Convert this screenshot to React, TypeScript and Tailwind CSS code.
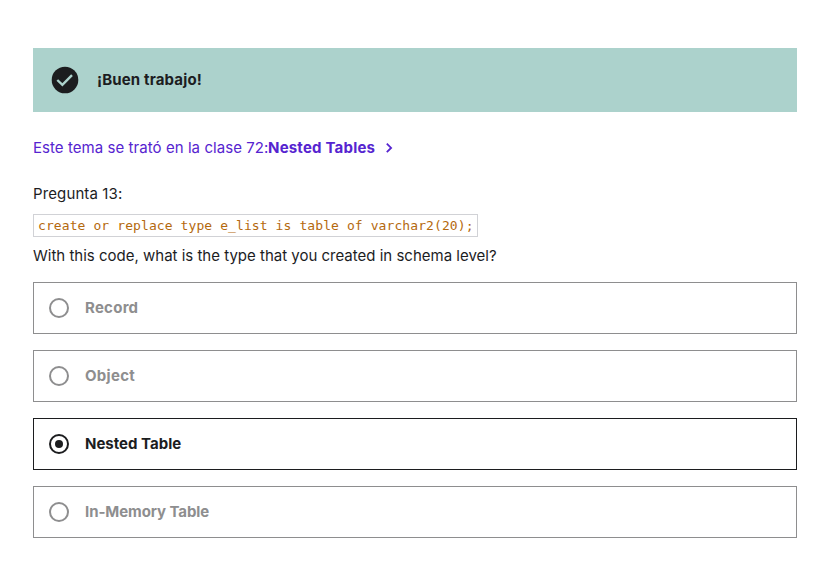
const options = [
  { label: "Record", tracking: "tracking-[0.25px]" },
  { label: "Object", tracking: "tracking-[0.3px]" },
  { label: "Nested Table", tracking: "tracking-[0px]", selected: true },
  { label: "In-Memory Table", tracking: "tracking-[-0.08px]" },
];

function CheckBadge() {
  return (
    <svg className="size-8" viewBox="0 0 32 32" fill="none">
      <circle cx="16" cy="16" r="13.3" fill="#1c1d1f" />
      <path d="M8.3 16 13.4 20.8 23 11.2" stroke="#acd2cc" strokeWidth="2.4" />
    </svg>
  );
}

export default function App() {
  return (
    <main className="h-[568px] w-[819px] bg-white pt-12 pr-[22px] pl-[33px] font-['Inter',sans-serif] text-[15px] leading-[22px] whitespace-nowrap text-[#1c1d1f]">
      <div className="flex h-16 items-center gap-4 bg-[#acd2cc] px-4">
        <CheckBadge />
        <span className="font-bold tracking-[0.15px]">¡Buen trabajo!</span>
      </div>
      <a className="mt-[25px] flex h-[22px] items-center text-[#5624d0]">
        <span className="w-[235px] tracking-[0.06px]">Este tema se trató en la clase 72:</span>
        <span className="w-[107px] font-bold tracking-[0.2px]">Nested Tables</span>
        <svg className="ml-[6px] size-4" viewBox="0 0 16 16" fill="none">
          <path d="m5.8 3.6 4.3 4.3-4.3 4.3" stroke="#5624d0" strokeWidth="1.8" />
        </svg>
      </a>
      <div className="mt-6 h-[22px] tracking-[0.12px]">Pregunta 13:</div>
      <div className="mt-[9px] flex">
        <code className="h-[23px] w-[445px] border border-[#d1d2d6] px-1 font-['DejaVu_Sans_Mono',monospace] text-[13px] leading-[21px] tracking-[0.094px] text-[#b4690e]">
          create or replace type e_list is table of varchar2(20);
        </code>
      </div>
      <div className="mt-2 h-[22px]">With this code, what is the type that you created in schema level?</div>
      <ul className="mt-[15px] flex flex-col gap-4">
        {options.map((o) => (
          <li
            key={o.label}
            className={`flex h-[52px] items-center gap-4 border px-[15px] font-bold ${
              o.selected ? "border-[#1c1d1f] text-[#1c1d1f]" : "border-[#8e8e8f] text-[#8e8e8f]"
            }`}
          >
            <span className="flex size-5 items-center justify-center rounded-full border-2 border-current">
              {o.selected && <span className="size-2 rounded-full bg-current" />}
            </span>
            <span className={o.tracking}>{o.label}</span>
          </li>
        ))}
      </ul>
    </main>
  );
}
